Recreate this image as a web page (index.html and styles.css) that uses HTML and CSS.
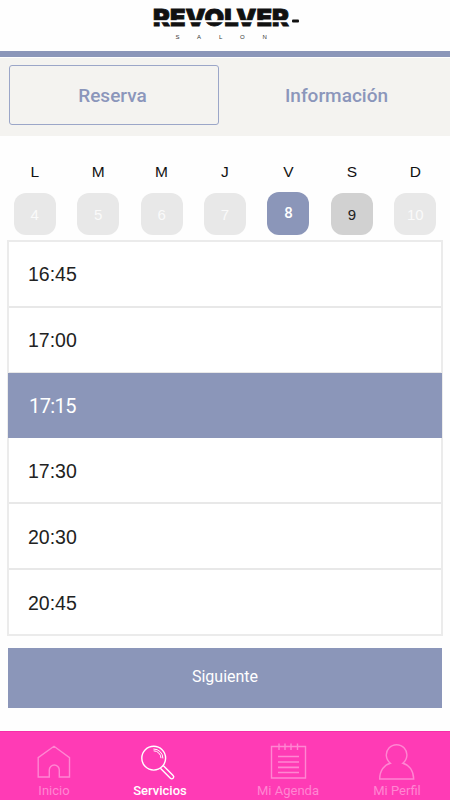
FILE: index.html
```html
<!DOCTYPE html>
<html lang="es">
<head>
    <meta charset="UTF-8">
    <meta name="viewport" content="width=device-width, initial-scale=1.0">
    <title>Revolver Salon</title>
    <link rel="stylesheet" href="styles.css">
</head>
<body>
    <header class="header">
        <svg class="logo" width="150" height="51" viewBox="150 0 150 51">
            <text class="logo-name" x="153" y="25.7" textLength="136" lengthAdjust="spacingAndGlyphs">REVOLVER</text>
            <rect x="150" y="20.2" width="140" height="2" fill="#fefefe"/>
            <rect x="292" y="19.5" width="7" height="3" rx="1" fill="#111"/>
            <text class="logo-sub" x="175.5" y="39.3">S</text>
            <text class="logo-sub" x="197" y="39.3">A</text>
            <text class="logo-sub" x="219" y="39.3">L</text>
            <text class="logo-sub" x="240" y="39.3">O</text>
            <text class="logo-sub" x="262.5" y="39.3">N</text>
        </svg>
    </header>

    <nav class="tabs">
        <a class="tab selected">Reserva</a>
        <a class="tab">Información</a>
    </nav>

    <div class="week">
        <div class="day"><span>L</span><b class="num">4</b></div>
        <div class="day"><span>M</span><b class="num">5</b></div>
        <div class="day"><span>M</span><b class="num">6</b></div>
        <div class="day"><span>J</span><b class="num">7</b></div>
        <div class="day"><span>V</span><b class="num active">8</b></div>
        <div class="day"><span>S</span><b class="num free">9</b></div>
        <div class="day"><span>D</span><b class="num">10</b></div>
    </div>

    <ul class="hours">
        <li>16:45</li>
        <li>17:00</li>
        <li class="active">17:15</li>
        <li>17:30</li>
        <li>20:30</li>
        <li>20:45</li>
    </ul>

    <button class="next">Siguiente</button>

    <footer class="menu">
        <a class="item inicio">
            <svg width="40" height="40" viewBox="0 0 40 40">
                <path d="M4.2 15.6 L20 4.3 L35.5 15.6 V35 H25.3 V28 a5 5 0 0 0 -10 0 V35 H4.2 Z"/>
            </svg>
            <span>Inicio</span>
        </a>
        <a class="item servicios">
            <svg width="40" height="40" viewBox="0 0 40 40">
                <circle cx="13.7" cy="16.2" r="11.9"/>
                <path d="M13.4 7 a9.3 9.3 0 0 1 9.5 9.4 M13.6 8.8 a7.5 7.5 0 0 1 7.4 7.4" stroke-width="1"/>
                <path d="M20.4 26.2 L30.4 36.3 a1.8 1.8 0 0 0 2.7 -2.7 L23.2 23.6"/>
            </svg>
            <span>Servicios</span>
        </a>
        <a class="item agenda">
            <svg width="40" height="40" viewBox="0 0 40 40">
                <path d="M3.5 4.5 H37.5 V36 H3.5 Z"/>
                <path d="M11 1.5 V8 M17 1.5 V8 M23 1.5 V8 M29.5 1.5 V8"/>
                <path class="lines" d="M10 14.5 H31 M10 20 H31 M10 25.3 H31 M10 30.5 H31"/>
            </svg>
            <span>Mi Agenda</span>
        </a>
        <a class="item perfil">
            <svg width="40" height="40" viewBox="0 0 40 40">
                <path d="M13.4 21.2 a10.3 10.3 0 1 1 12.4 0 C32 22.8 36.4 28.5 36.7 37 H2.7 C2.7 28.5 7.3 22.8 13.4 21.2 Z"/>
            </svg>
            <span>Mi Perfil</span>
        </a>
    </footer>
</body>
</html>
```

FILE: styles.css
```css
* {
    box-sizing: border-box;
}
body {
    margin: 0;
    width: 450px;
    height: 800px;
    display: flex;
    flex-direction: column;
    background-color: #fefefe;
    font-family: Roboto, sans-serif;
    overflow: hidden;
}

/* header */
.header {
    height: 57px;
    border-bottom: 6px solid #8b96b9;
    display: flex;
    justify-content: center;
}
.logo-name {
    font-family: Inter, sans-serif;
    font-weight: 900;
    font-size: 23.5px;
    fill: #111;
    stroke: #111;
    stroke-width: 0.8;
}
.logo-sub {
    font-family: "Liberation Sans", sans-serif;
    font-size: 6px;
    fill: #333;
}

/* tabs */
.tabs {
    height: 78px;
    margin-top: 1px;
    padding: 7px 9px 11px;
    display: flex;
    background-color: #f4f3f0;
}
.tab {
    flex: 1;
    padding-left: 13px;
    line-height: 62px;
    text-align: center;
    color: #8b96bb;
    font-size: 19px;
    font-weight: 500;
}
.tab.selected {
    flex: none;
    width: 210px;
    padding: 0 3px 0 0;
    line-height: 60px;
    border: 1px solid #9ba6c8;
    border-radius: 3px;
}

/* days */
.week {
    height: 104px;
    padding: 26px 3px 0;
    display: grid;
    grid-template-columns: repeat(7, 1fr);
    font-family: "Liberation Sans", sans-serif;
    font-size: 15.5px;
    color: #111;
}
.day {
    display: flex;
    flex-direction: column;
    align-items: center;
}
.day span {
    height: 31px;
    line-height: 19px;
}
.num {
    width: 42px;
    height: 42px;
    line-height: 43px;
    border-radius: 12px;
    background-color: #e8e8e8;
    color: #fafafa;
    font-size: 15px;
    font-weight: normal;
    text-align: center;
}
.num.active {
    height: 43px;
    margin-top: -1px;
    background-color: #8b96b9;
    color: #fff;
    font-family: Roboto, sans-serif;
    font-weight: 500;
}
.num.free {
    background-color: #d1d1d1;
    color: #222;
}

/* hours */
.hours {
    width: 436px;
    height: 396px;
    margin: 0 7px;
    padding: 0;
    display: flex;
    flex-direction: column;
    list-style: none;
    border: 2px solid #ebebeb;
    background-color: #fff;
    font-family: "Liberation Sans", sans-serif;
    font-size: 19.5px;
    color: #222;
}
.hours li {
    flex: 1;
    padding: 2px 0 0 19px;
    display: flex;
    align-items: center;
    border-bottom: 2px solid #e8e8e8;
}
.hours li:last-child {
    border-bottom: none;
}
.hours li.active {
    margin: -1px -1px 0;
    padding-left: 21px;
    border-color: #8b96b9;
    background-color: #8b96b9;
    color: #fff;
    font-family: Roboto, sans-serif;
    font-size: 20px;
    letter-spacing: -0.6px;
}

.next {
    width: 434px;
    height: 60px;
    margin: 12px 8px 0;
    padding-bottom: 5px;
    border: none;
    background-color: #8b96b9;
    color: #fff;
    font-family: Roboto, sans-serif;
    font-size: 16px;
}

/* bottom menu */
.menu {
    height: 69px;
    margin-top: auto;
    display: flex;
    background-color: #ff3bb5;
    border-top: 1px solid #f52fa8;
}
.item {
    padding-top: 10px;
    display: flex;
    flex-direction: column;
    align-items: center;
    color: #ff86d2;
    font-size: 13px;
    line-height: 17px;
    white-space: nowrap;
}
.item svg {
    fill: none;
    stroke: currentColor;
    stroke-width: 1.4;
    flex: none;
}
.item .lines {
    stroke-width: 1.7;
}
.inicio {
    width: 108px;
}
.servicios {
    width: 104px;
    color: #fff;
    font-weight: 500;
}
.agenda {
    width: 152px;
}
.perfil {
    width: 66px;
}
```
